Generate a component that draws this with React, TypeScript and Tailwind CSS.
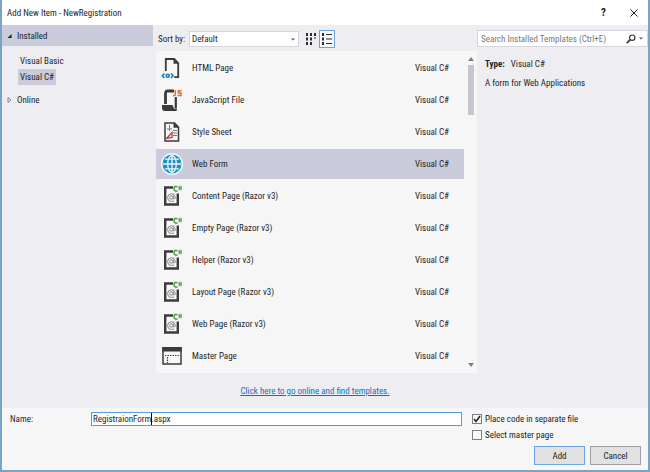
import { useState } from 'react';
import type { ReactNode } from 'react';

type IconName = 'html' | 'js' | 'css' | 'globe' | 'razor' | 'master';

const templates: { name: string; icon: IconName }[] = [
  { name: 'HTML Page', icon: 'html' },
  { name: 'JavaScript File', icon: 'js' },
  { name: 'Style Sheet', icon: 'css' },
  { name: 'Web Form', icon: 'globe' },
  { name: 'Content Page (Razor v3)', icon: 'razor' },
  { name: 'Empty Page (Razor v3)', icon: 'razor' },
  { name: 'Helper (Razor v3)', icon: 'razor' },
  { name: 'Layout Page (Razor v3)', icon: 'razor' },
  { name: 'Web Page (Razor v3)', icon: 'razor' },
  { name: 'Master Page', icon: 'master' },
];

const glyphs: Record<IconName, ReactNode> = {
  html: (
    <>
      <path d="M4.8 14V2h8.4l4 4v14.2h-4" fill="none" stroke="#3b3b3d" strokeWidth="1.8" />
      <path d="M12.5 1.5v5.2h5z" fill="#3b3b3d" />
      <g fill="none" stroke="#1480b4" strokeWidth="1.6">
        <path d="M3.4 16.4 1.4 18.7l2 2.3M10 16.4l2 2.3-2 2.3" />
        <circle cx="6.7" cy="18.7" r="1.5" />
      </g>
    </>
  ),
  js: (
    <>
      <path d="M13 2H6.5Q4.5 2 4.5 4.5V15" fill="none" stroke="#3b3b3d" strokeWidth="2.8" />
      <path d="M14.8 8v11" fill="none" stroke="#3b3b3d" strokeWidth="2.2" />
      <path d="M1 16h10.500l1.500 3.500h3v1.500q-.5 1-2 1H4q-3 0-3-3z" fill="#3b3b3d" />
      <path d="M14.300 1v4.500q0 1.300-2.300 1.200M20.500 1.700h-3.200v2.300h2.700v2.600h-3.500" fill="none" stroke="#e0702f" strokeWidth="1.5" />
    </>
  ),
  css: (
    <>
      <path d="M4 2h9.500l4 4v14H4z" fill="#f7f7f7" stroke="#3b3b3d" strokeWidth="1.5" />
      <path d="M12.500 1.500v5.200h5.500z" fill="#3b3b3d" />
      <path d="M8.500 4v6M6 8h5M12 9.500h4M12 12h4M12 14.500h4" stroke="#77777a" strokeWidth="1" />
      <path d="M5.500 17.500l5.500-6v5z" fill="none" stroke="#c2414b" strokeWidth="1.400" />
    </>
  ),
  globe: (
    <>
      <circle cx="11" cy="11" r="11" fill="#f3f9fc" />
      <circle cx="11" cy="11" r="9.500" fill="#1b91c2" />
      <g fill="none" stroke="#f3f9fc" strokeWidth="1.300">
        <ellipse cx="11" cy="11" rx="4.300" ry="8.500" />
        <path d="M11 2v18M2 11h18M4 6.200h14M4 15.800h14" />
      </g>
    </>
  ),
  razor: (
    <>
      <path d="M12 2.500H4.200v17h12.600V8.500" fill="#f7f7f7" stroke="#3b3b3d" strokeWidth="2.400" />
      <g fill="none" stroke="#858588" strokeWidth="1">
        <circle cx="10.400" cy="12.500" r="1.700" />
        <path d="M12.200 10.500v2.800q.2 1 1.200.8 1-.4.800-2-.4-3.300-3.700-3.400-3.800.2-4 3.900.3 3.800 4 3.900 1.600 0 2.500-.7" />
      </g>
      <path d="M16.500 1.800q-3.500-1-3.500 1.900t3.500 2.300" fill="none" stroke="#3f9a46" strokeWidth="1.500" />
      <path d="M18.300.8v4.500M20 .8v4.500M17.400 2.200h3.600M17.400 3.900h3.600" stroke="#3f9a46" strokeWidth=".8" />
    </>
  ),
  master: (
    <>
      <path d="M2 3h18v16H2z" fill="#f7f7f7" stroke="#3b3b3d" strokeWidth="1.500" />
      <path d="M1.300 2h19.400v4.500H1.300z" fill="#3b3b3d" />
      <path d="M4 10.500h15M6.500 12v6" stroke="#3b3b3d" strokeWidth="1.200" strokeDasharray="1.400 1.100" />
    </>
  ),
};

function TemplateIcon({ name }: { name: IconName }) {
  return (
    <svg viewBox="0 0 22 22" className="h-[22px] w-[22px] shrink-0" aria-hidden="true">
      {glyphs[name]}
    </svg>
  );
}

function CheckOption({ label, initial }: { label: string; initial: boolean }) {
  const [checked, setChecked] = useState(initial);

  return (
    <label className="flex h-4 items-center gap-[3px]">
      <span className="relative h-[10px] w-[10px]">
        <input
          type="checkbox"
          checked={checked}
          onChange={(e) => setChecked(e.target.checked)}
          className="block h-[10px] w-[10px] appearance-none border border-[#808082] bg-[#fafafa]"
        />
        {checked && (
          <svg viewBox="0 0 10 10" className="pointer-events-none absolute inset-0" aria-hidden="true">
            <path d="M2 5l2 2.500L8 2" fill="none" stroke="#1e1e1e" strokeWidth="1.500" />
          </svg>
        )}
      </span>
      {label}
    </label>
  );
}

function Sidebar() {
  return (
    <nav className="w-[151px] shrink-0" aria-label="Template categories">
      <button type="button" className="flex h-[21px] w-full items-center gap-[5px] bg-[#cbccdb] pl-[5px]">
        <svg viewBox="0 0 6 6" className="h-[6px] w-[5px]" aria-hidden="true">
          <path d="M5.500.5v5h-5z" fill="#1e1e1e" />
        </svg>
        Installed
      </button>
      <ul className="mt-[7px] flex flex-col items-start pl-4">
        <li>
          <button type="button" className="block h-4 px-[2px]">Visual Basic</button>
        </li>
        <li>
          <button type="button" className="block h-4 bg-[#cbccdb] px-[2px]">Visual C#</button>
        </li>
      </ul>
      <button type="button" className="mt-[6px] flex h-[18px] items-center gap-[5px] pl-[5px]">
        <svg viewBox="0 0 5 6" className="h-[6px] w-[5px]" aria-hidden="true">
          <path d="M1 .5v5L4 3z" fill="none" stroke="#6d6d70" strokeWidth=".8" />
        </svg>
        Online
      </button>
    </nav>
  );
}

function Toolbar() {
  return (
    <div className="flex h-[26px] items-center pt-[1px] pl-[5px]">
      <label htmlFor="sort" className="w-[31px] shrink-0 whitespace-nowrap">Sort by:</label>
      <div className="relative">
        <select id="sort" className="block h-4 w-[110px] appearance-none border border-[#d5d6e0] bg-white px-[2px]">
          <option>Default</option>
          <option>Name Ascending</option>
        </select>
        <svg viewBox="0 0 6 3" className="pointer-events-none absolute top-[7px] right-1 h-[3px] w-1" aria-hidden="true">
          <path d="M0 0h6L3 3z" fill="#55555a" />
        </svg>
      </div>
      <button type="button" aria-label="Medium icons" className="ml-[6px] p-[1px]">
        <svg viewBox="0 0 10 12" className="h-3 w-[10px]" fill="#2d2d30" aria-hidden="true">
          <path d="M0 0h2v3H0zM4 0h2v3H4zM8 0h2v3H8zM0 4.500h2v3H0zM4 4.500h2v3H4zM8 4.500h2v1H8zM0 9h2v3H0zM4 9h2v3H4z" />
        </svg>
      </button>
      <button type="button" aria-label="Small icons" className="ml-[2px] border border-[#6aa5e2] bg-[#f5f9fd] px-[2px] py-[2px]">
        <svg viewBox="0 0 10 12" className="h-3 w-[10px]" fill="#2d2d30" aria-hidden="true">
          <path d="M0 0h2v3H0zM0 4.500h2v3H0zM0 9h2v3H0zM4 1h6v1H4zM4 5.500h6v1H4zM4 10h6v1H4z" />
        </svg>
      </button>
    </div>
  );
}

function TemplateList() {
  const [selected, setSelected] = useState('Web Form');

  return (
    <div className="ml-[3px] flex bg-[#f6f6f6]">
      <ul className="min-w-0 flex-1 py-[1px]">
        {templates.map(({ name, icon }) => (
          <li key={name} className="py-[1px]">
            <button
              type="button"
              onClick={() => setSelected(name)}
              className={`flex h-[30px] w-full items-center gap-[9px] pr-[15px] pl-[5px] text-left ${selected === name ? 'bg-[#cbccdb]' : ''}`}
            >
              <TemplateIcon name={icon} />
              <span className="flex-1">{name}</span>
              <span>Visual C#</span>
            </button>
          </li>
        ))}
      </ul>
      <div className="flex w-[13px] flex-col items-center py-[6px]">
        <svg viewBox="0 0 6 4" className="h-1 w-[6px]" aria-hidden="true">
          <path d="M0 4h6L3 0z" fill="#808086" />
        </svg>
        <div className="mt-1 h-[50px] w-[6px] bg-[#c5c6d0]" />
        <svg viewBox="0 0 6 4" className="mt-auto h-1 w-[6px]" aria-hidden="true">
          <path d="M0 0h6L3 4z" fill="#808086" />
        </svg>
      </div>
    </div>
  );
}

function Details() {
  return (
    <aside className="w-[171px] shrink-0 pt-[5px]">
      <div className="flex h-[17px] items-center border border-[#d5d6e0] bg-white pr-1 pl-[3px]">
        <input
          type="search"
          aria-label="Search installed templates"
          placeholder="Search Installed Templates (Ctrl+E)"
          className="min-w-0 flex-1 bg-transparent outline-none placeholder:text-[#77777a]"
        />
        <svg viewBox="0 0 10 10" className="h-[10px] w-[10px]" fill="none" stroke="#3b3b3d" aria-hidden="true">
          <circle cx="6.200" cy="3.700" r="2.700" strokeWidth="1.200" />
          <path d="M4.200 5.700.8 9.200" strokeWidth="1.700" />
        </svg>
        <svg viewBox="0 0 6 3" className="ml-[3px] h-[3px] w-1" aria-hidden="true">
          <path d="M0 0h6L3 3z" fill="#55555a" />
        </svg>
      </div>
      <div className="px-[8px] pt-[10px]">
        <p>
          <span className="mr-[6px] font-bold">Type:</span>
          Visual C#
        </p>
        <p className="mt-[5px]">A form for Web Applications</p>
      </div>
    </aside>
  );
}

function Footer() {
  return (
    <footer className="flex-1 bg-[#f6f6f6] pr-[7px] pb-1 pl-2">
      <div className="flex items-start pt-[3px]">
        <label htmlFor="name" className="mt-[1px] w-[81px] shrink-0">Name:</label>
        <div className="relative mt-[1px] min-w-0 flex-1">
          <input
            id="name"
            defaultValue="RegistraionForm.aspx"
            className="block h-[14px] w-full border border-[#5b9bd5] bg-white px-[1px] outline-none"
          />
          <span className="absolute top-[1px] left-[60px] h-3 w-px bg-black" />
        </div>
        <div className="ml-[10px] w-[169px] shrink-0">
          <CheckOption label="Place code in separate file" initial={true} />
          <CheckOption label="Select master page" initial={false} />
        </div>
      </div>
      <div className="mt-[3px] flex justify-end gap-[5px]">
        <button type="button" className="h-[19px] w-[51px] border border-[#6aa5e2] bg-[#e1e1e2]">Add</button>
        <button type="button" className="h-[19px] w-[51px] border border-[#a0a0a3] bg-[#e1e1e2]">Cancel</button>
      </div>
    </footer>
  );
}

export default function App() {
  return (
    <div className="flex min-h-screen flex-col border-r-2 border-b-2 border-l-2 border-[#7ba3c4] bg-[#eeeef2] font-['Roboto_Condensed','Roboto',sans-serif] text-[9px] leading-[14px] text-[#1e1e1e]">
      <header className="flex h-[25px] items-center bg-white pr-[10px] pl-[5px]">
        <h1 className="flex-1">Add New Item - NewRegistration</h1>
        <button type="button" aria-label="Help" className="text-[11px] font-bold">?</button>
        <button type="button" aria-label="Close" className="ml-6">
          <svg viewBox="0 0 8 8" className="h-2 w-2" aria-hidden="true">
            <path d="M.5.5l7 7M7.500.5l-7 7" stroke="#1e1e1e" strokeWidth="1" />
          </svg>
        </button>
      </header>
      <div className="flex">
        <Sidebar />
        <main className="min-w-0 flex-1">
          <Toolbar />
          <TemplateList />
          <div className="flex h-[35px] items-center justify-center">
            <a href="#online" className="text-[#0e70c0] underline">Click here to go online and find templates.</a>
          </div>
        </main>
        <Details />
      </div>
      <Footer />
    </div>
  );
}
